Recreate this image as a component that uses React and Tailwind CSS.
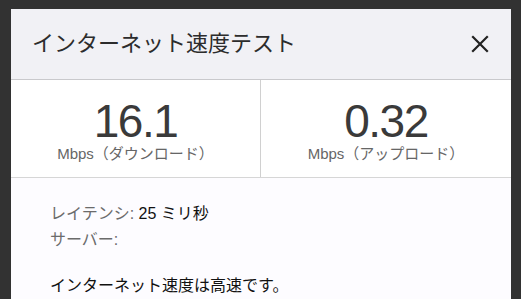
export default function App() {
  const jp = { fontFamily: '"Liberation Sans", "Noto Sans CJK JP", sans-serif' };
  return (
    <div className="w-[521px] h-[299px] overflow-hidden bg-[#323232] pt-[9px] pl-[11px]" style={jp}>
      <div className="w-[500px] h-[290px] flex flex-col">
        <div className="h-[70px] bg-[#f1f1f5] flex items-center justify-between pl-[21px] pr-[22px] border-b border-[#c9c9cc] box-content">
          <div className="text-[22px] text-[#2c2c2c] leading-none">インターネット速度テスト</div>
          <svg width="18" height="18" viewBox="0 0 18 18">
            <path d="M2 2 L16 16 M16 2 L2 16" stroke="#222" strokeWidth="2.2" strokeLinecap="square" />
          </svg>
        </div>
        <div className="h-[98px] bg-white flex border-b border-[#d6d6d6] box-content">
          <div className="w-[250px] border-r border-[#d0d0d0] flex flex-col items-center pt-[18px]">
            <div className="text-[46px] leading-[46px] tracking-[-1.5px] text-[#3a3a3a]">16.1</div>
            <div className="text-[15px] leading-[18px] text-[#666] mt-[1px]">Mbps（ダウンロード）</div>
          </div>
          <div className="flex-1 flex flex-col items-center pt-[18px]">
            <div className="text-[46px] leading-[46px] tracking-[-1.5px] text-[#3a3a3a]">0.32</div>
            <div className="text-[15px] leading-[18px] text-[#666] mt-[1px]">Mbps（アップロード）</div>
          </div>
        </div>
        <div className="flex-1 bg-[#fdfcff] pl-[39px] pt-[23px] text-[16px] leading-[26px]">
          <div><span className="text-[#6b6b6b]">レイテンシ: </span><span className="text-[#111]">25 ミリ秒</span></div>
          <div className="text-[#6b6b6b]">サーバー:</div>
          <div className="text-[#111] mt-[20px]">インターネット速度は高速です。</div>
        </div>
      </div>
    </div>
  );
}
